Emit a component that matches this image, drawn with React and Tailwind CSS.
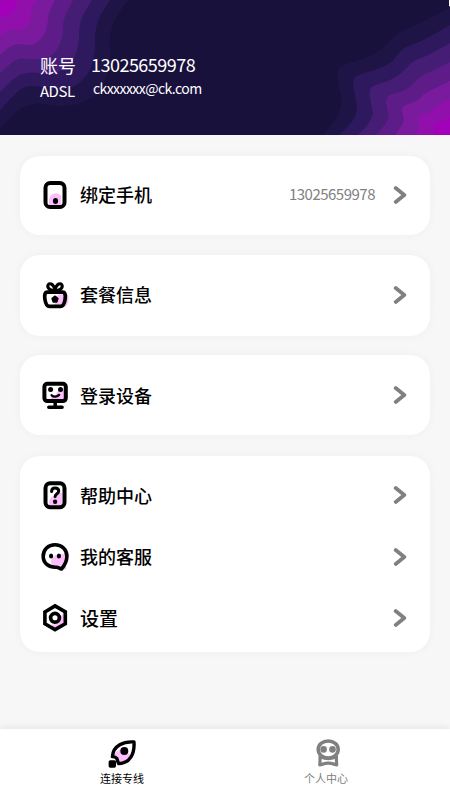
import React from 'react';

const leftWaves = [
  { color: '#1f1446', points: [[385, 0], [347, 55], [330, 110], [331, 165], [322, 225], [285, 285], [230, 313], [175, 318], [110, 311], [65, 325], [30, 355], [0, 385]] },
  { color: '#2f195e', points: [[330, 0], [297, 55], [286, 100], [284, 150], [272, 205], [240, 247], [195, 267], [140, 262], [85, 259], [50, 278], [0, 330]] },
  { color: '#461d75', points: [[276, 0], [248, 48], [238, 85], [236, 125], [221, 175], [185, 210], [145, 221], [90, 218], [50, 230], [0, 275]] },
  { color: '#5d1c88', points: [[220, 0], [198, 42], [189, 75], [186, 112], [168, 152], [135, 175], [95, 177], [55, 177], [25, 197], [0, 220]] },
  { color: '#7a1a9c', points: [[165, 0], [147, 40], [141, 80], [125, 115], [95, 134], [55, 133], [25, 144], [0, 165]] },
  { color: '#9110ac', points: [[110, 0], [96, 27], [91, 60], [75, 84], [52, 91], [28, 89], [0, 108]] },
  { color: '#a300b9', points: [[55, 0], [46, 22], [38, 38], [17, 45], [0, 55]] },
];

const rightWaves = [
  { color: '#1f1446', points: [[1350, 22], [1265, 67], [1195, 100], [1155, 138], [1110, 167], [1040, 192], [1014, 210], [1015, 245], [1024, 300], [1013, 345], [968, 405]] },
  { color: '#2f195e', points: [[1350, 75], [1270, 120], [1210, 147], [1175, 185], [1130, 208], [1078, 225], [1060, 243], [1065, 285], [1071, 325], [1060, 360], [1018, 405]] },
  { color: '#461d75', points: [[1350, 130], [1285, 165], [1240, 185], [1200, 222], [1165, 242], [1122, 257], [1109, 275], [1113, 310], [1118, 340], [1104, 373], [1074, 405]] },
  { color: '#5d1c88', points: [[1350, 186], [1300, 211], [1262, 230], [1230, 260], [1205, 274], [1168, 286], [1158, 302], [1162, 330], [1163, 360], [1130, 405]] },
  { color: '#7a1a9c', points: [[1350, 242], [1305, 265], [1275, 280], [1250, 302], [1215, 316], [1206, 330], [1210, 365], [1185, 405]] },
  { color: '#9110ac', points: [[1350, 298], [1310, 318], [1290, 337], [1257, 348], [1255, 365], [1256, 385], [1244, 405]] },
  { color: '#a300b9', points: [[1350, 352], [1325, 365], [1303, 375], [1303, 390], [1299, 405]] },
];

// Smooth curve through the points, closed at the given corner
const wavePath = (points, corner) => {
  let d = `M${points[0].join(' ')}`;
  for (let i = 0; i < points.length - 1; i++) {
    const a = points[i - 1] || points[i];
    const b = points[i];
    const c = points[i + 1];
    const e = points[i + 2] || c;
    d += `C${b[0] + (c[0] - a[0]) / 6} ${b[1] + (c[1] - a[1]) / 6} ${c[0] - (e[0] - b[0]) / 6} ${c[1] - (e[1] - b[1]) / 6} ${c[0]} ${c[1]}`;
  }
  return `${d}L${corner}Z`;
};

const HeaderWaves = () => (
  <svg viewBox="0 0 1350 405" className="absolute inset-0 h-full w-full">
    {leftWaves.map((w) => (
      <path key={w.color} d={wavePath(w.points, '0 0')} fill={w.color} />
    ))}
    {rightWaves.map((w) => (
      <path key={w.color} d={wavePath(w.points, '1350 405')} fill={w.color} />
    ))}
    <rect x="1347" y="0" width="3" height="19" fill="#fff" />
  </svg>
);

const IconBase = ({ children }) => (
  <svg
    viewBox="0 0 30 30"
    className="h-[30px] w-[30px] shrink-0"
    fill="none"
    stroke="#000"
    strokeWidth="4"
    strokeLinecap="round"
    strokeLinejoin="round"
  >
    {children}
  </svg>
);

const PhoneIcon = () => (
  <IconBase>
    <path d="M9 27V20a6.8 6.8 0 0 1 12-4.300V27Z" fill="#fbbdfb" stroke="none" />
    <rect x="5.500" y="3.100" width="19" height="23.900" rx="4.600" />
    <ellipse cx="15.500" cy="21" rx="2.600" ry="3" fill="#000" stroke="none" />
  </IconBase>
);

const PackageIcon = () => (
  <IconBase>
    <path d="M14 25c3-2 1-8 5-10.500H28c1 4 .6 9-2 12H14Z" fill="#fbbdfb" stroke="none" />
    <path d="M7.500 12.200h15c2.800 0 3.200 3.200 2.600 7-.6 4-1.800 7.200-4.600 7.200h-11c-2.800 0-4-3.200-4.600-7.200-.6-3.800-.2-7 2.600-7Z" strokeWidth="3.700" />
    <path d="M15 10.500C11 11 7.400 8.600 7.800 5.800 8.500 2.200 13.700 3 15 10.500 16.300 3 21.500 2.200 22.200 5.800 22.600 8.600 19 11 15 10.500Z" strokeWidth="3.100" />
    <path d="m15 16.800 2.400 1.900-.9 2.700h-3l-.9-2.700Z" fill="#000" strokeWidth="2.500" />
  </IconBase>
);

const DeviceIcon = () => (
  <IconBase>
    <path d="M10.500 20c.2-3.500 3-4.500 5.500-5 1-4.500 4-6 9-5.500V20Z" fill="#fbbdfb" stroke="none" />
    <rect x="4.400" y="3.800" width="21.400" height="17.300" rx="3" />
    <circle cx="10.600" cy="9.400" r="2.500" fill="#000" stroke="none" />
    <circle cx="20.500" cy="9.400" r="2.500" fill="#000" stroke="none" />
    <path d="M11.600 15.200c1.800 2.100 5.300 2 7.500-.3" strokeWidth="2.300" />
    <path d="M15.200 22v5M8.800 27.200h13.300" strokeWidth="3.500" />
  </IconBase>
);

const HelpIcon = () => (
  <IconBase>
    <path d="M9.500 26c-1.500-5 1-9.500 5.500-10 1-3 3-4.500 7-3V26Z" fill="#fbbdfb" stroke="none" />
    <rect x="5.500" y="3.300" width="19" height="23.900" rx="4.600" />
    <path d="M11.600 11.400c0-2.200 1.500-3.300 3.500-3.300 2.100 0 3.600 1.200 3.600 3.100 0 2.600-3.600 2.500-3.600 5.400" strokeWidth="3" />
    <circle cx="15.100" cy="21.700" r="2.200" fill="#000" stroke="none" />
  </IconBase>
);

const ServiceIcon = () => (
  <IconBase>
    <path d="M11.500 22c-1.200-3 0-6 3-8 4-2.500 8-2.500 11.500-.5v14L12 25Z" fill="#fbbdfb" stroke="none" />
    <path d="M21.500 27c-2-.3-3-1.800-5.300-1.700C8.500 25.600 3.200 21 3.200 14.300 3.200 7.500 8.200 2.800 15 2.800S26.900 7.500 26.900 14.300c0 5.100-1.800 8.500-5.400 12.700Z" strokeWidth="3.600" />
    <ellipse cx="11.100" cy="14" rx="2.100" ry="2.500" fill="#000" stroke="none" />
    <ellipse cx="18.900" cy="14" rx="2.100" ry="2.500" fill="#000" stroke="none" />
  </IconBase>
);

const SettingsIcon = () => (
  <IconBase>
    <path d="M11 20c3 4 9 0 12-10l2 0v11l-10 6Z" fill="#fbbdfb" stroke="none" />
    <path d="M15 2.900 25.300 8.900V20.700L15 26.600 4.900 20.700V8.900Z" strokeWidth="3.600" strokeLinejoin="miter" />
    <circle cx="15" cy="14.800" r="4.400" strokeWidth="3.700" />
  </IconBase>
);

const RocketIcon = () => (
  <svg viewBox="0 0 32 32" className="h-8 w-8" fill="none" stroke="#000" strokeWidth="3.400" strokeLinejoin="round">
    <path d="M7.500 19c1-4.500 4-7 8-7.500L25 17l-5 6.500-7 1-2.500-4.300Z" fill="#fbbdfb" stroke="none" />
    <path d="M28 4C18 3.300 7.200 7.200 6.400 18.600c2 .1 3.500.6 4.100 1.500.9 1.200.8 2.900 2.200 5.500C24.500 25.100 28.700 15.100 28 4Z" />
    <circle cx="18.300" cy="13" r="4" fill="#000" stroke="none" />
    <rect x="2.600" y="22.300" width="7.400" height="7.400" rx="1.700" fill="#000" stroke="none" />
  </svg>
);

const ProfileIcon = () => (
  <svg viewBox="0 0 32 32" className="h-8 w-8" fill="none" stroke="#808080" strokeWidth="3.500" strokeLinejoin="round">
    <ellipse cx="16.200" cy="11.500" rx="10" ry="8.600" />
    <circle cx="11.600" cy="11.400" r="3.300" fill="#808080" stroke="none" />
    <circle cx="20.500" cy="11.400" r="3.300" fill="#808080" stroke="none" />
    <path d="M8 18.500c.2 3.200 0 5.500-.2 8.400 2.500-.6 5-1.700 8.500-1.700s6 1.100 8.400 1.700c-.2-2.900-.4-5.200-.2-8.400-4.500 2.800-12 2.800-16.500 0Z" strokeWidth="3.200" />
  </svg>
);

const Chevron = () => (
  <svg viewBox="0 0 14 18" className="h-[18px] w-3.5 shrink-0" fill="none" stroke="#808080" strokeWidth="3.800" strokeLinecap="round" strokeLinejoin="round">
    <path d="M2.700 2.100 11.300 9 2.700 15.900" />
  </svg>
);

const Row = ({ icon: Icon, label, value, className = '', labelClass = 'text-[18px] pb-[2px]' }) => (
  <div className={`flex items-center pl-5 pr-[23px] ${className}`}>
    <Icon />
    <span className={`ml-2.5 flex-1 leading-6 font-medium text-black ${labelClass}`}>{label}</span>
    {value && <span className="mr-[18px] pb-px text-[15px] leading-5 tracking-[-0.5px] text-[#808080]">{value}</span>}
    <Chevron />
  </div>
);

const Card = ({ children, className = '' }) => (
  <section className={`rounded-[20px] bg-white shadow-[0_0_10px_rgba(0,0,0,0.04)] ${className}`}>
    {children}
  </section>
);

const App = () => {
  return (
    <div className="flex h-screen w-full flex-col overflow-hidden bg-[#f7f7f7] font-['Noto_Sans_CJK_SC',sans-serif]">
      {/* Account header */}
      <header className="relative h-[135px] shrink-0 overflow-hidden bg-[#18113c] text-white">
        <HeaderWaves />
        <div className="relative grid grid-cols-[51px_1fr] pt-[52px] pl-10">
          <span className="text-[18px] leading-[26px]">账号</span>
          <span className="text-[18px] leading-[25px] tracking-[-0.52px]">13025659978</span>
          <span className="text-[15px] leading-[25px] tracking-[-0.5px]">ADSL</span>
          <span className="pl-0.5 text-[14px] leading-[20px] tracking-[-0.55px]">ckxxxxxx@ck.com</span>
        </div>
      </header>

      <main className="flex-1 px-5 pt-[21px]">
        <Card>
          <Row icon={PhoneIcon} label="绑定手机" value="13025659978" className="h-[79px] pb-[2px]" />
        </Card>
        <Card className="mt-5">
          <Row icon={PackageIcon} label="套餐信息" className="h-[81px] pb-[2px]" />
        </Card>
        <Card className="mt-[19px]">
          <Row icon={DeviceIcon} label="登录设备" className="h-20" labelClass="text-[18px]" />
        </Card>
        <Card className="mt-[21px] pt-2 pb-[2px]">
          <Row icon={HelpIcon} label="帮助中心" className="h-[62px]" labelClass="text-[18px]" />
          <Row icon={ServiceIcon} label="我的客服" className="h-[62px]" />
          <Row icon={SettingsIcon} label="设置" className="h-[62px] pb-[2px]" labelClass="text-[19px]" />
        </Card>
      </main>

      {/* Bottom tabs */}
      <nav className="flex h-[71px] shrink-0 bg-white px-5 shadow-[0_-2px_7px_rgba(0,0,0,0.07)]">
        <div className="flex flex-1 flex-col items-center pt-[9px] pr-0.5">
          <RocketIcon />
          <span className="text-[11px] leading-4 text-black">连接专线</span>
        </div>
        <div className="flex flex-1 flex-col items-center pt-[9px]">
          <ProfileIcon />
          <span className="mr-1 text-[11px] leading-4 text-[#808080]">个人中心</span>
        </div>
      </nav>
    </div>
  );
};

export default App;
